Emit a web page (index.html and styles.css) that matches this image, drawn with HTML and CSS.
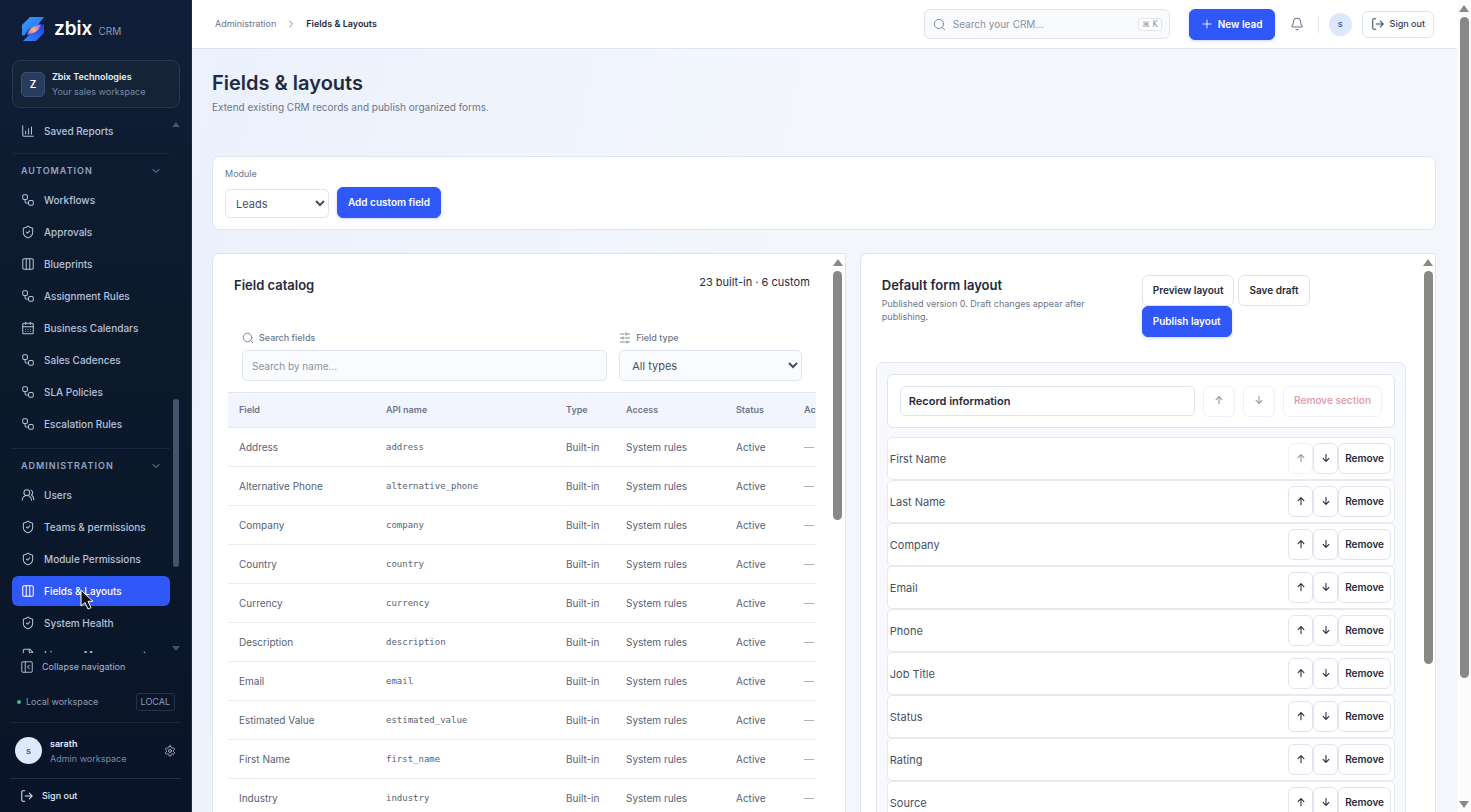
FILE: index.html
```html
<!DOCTYPE html>
<html lang="en">
<head>
<meta charset="utf-8">
<meta name="viewport" content="width=device-width, initial-scale=1">
<title>Fields &amp; Layouts · zbix CRM</title>
<link rel="stylesheet" href="styles.css">
</head>
<body>
<svg class="sprite" aria-hidden="true">
  <symbol id="i-chart" viewBox="0 0 24 24"><path d="M3 3v16a2 2 0 0 0 2 2h16M8 17v-5M13 17V8M18 17V5"/></symbol>
  <symbol id="i-flow" viewBox="0 0 24 24"><rect x="3" y="3" width="8" height="8" rx="2"/><path d="M7 11v4a2 2 0 0 0 2 2h4"/><rect x="13" y="13" width="8" height="8" rx="2"/></symbol>
  <symbol id="i-shield" viewBox="0 0 24 24"><path d="M20 13c0 5-3.500 7.500-7.660 8.950a1 1 0 0 1-.67-.01C7.500 20.500 4 18 4 13V6a1 1 0 0 1 1-1c2 0 4.500-1.200 6.240-2.720a1.170 1.170 0 0 1 1.520 0C14.510 3.810 17 5 19 5a1 1 0 0 1 1 1z"/><path d="m9 12 2 2 4-4"/></symbol>
  <symbol id="i-columns" viewBox="0 0 24 24"><rect x="3" y="3" width="18" height="18" rx="2"/><path d="M9 3v18M15 3v18"/></symbol>
  <symbol id="i-calendar" viewBox="0 0 24 24"><rect x="3" y="4" width="18" height="18" rx="2"/><path d="M8 2v4M16 2v4M3 10h18M8 14h.01M12 14h.01M16 14h.01M8 18h.01M12 18h.01M16 18h.01"/></symbol>
  <symbol id="i-users" viewBox="0 0 24 24"><path d="M18 21a8 8 0 0 0-16 0"/><circle cx="10" cy="8" r="5"/><path d="M22 20c0-3.370-2-6.500-4-8a5 5 0 0 0-.45-8.300"/></symbol>
  <symbol id="i-file" viewBox="0 0 24 24"><path d="M15 2H6a2 2 0 0 0-2 2v16a2 2 0 0 0 2 2h12a2 2 0 0 0 2-2V7z"/><path d="M14 2v4a2 2 0 0 0 2 2h4"/></symbol>
  <symbol id="i-collapse" viewBox="0 0 24 24"><rect x="3" y="3" width="18" height="18" rx="2"/><path d="M9 3v18M16 15l-3-3 3-3"/></symbol>
  <symbol id="i-gear" viewBox="0 0 24 24"><path d="M12.220 2h-.44a2 2 0 0 0-2 2v.18a2 2 0 0 1-1 1.730l-.43.25a2 2 0 0 1-2 0l-.15-.08a2 2 0 0 0-2.730.73l-.22.38a2 2 0 0 0 .73 2.730l.15.1a2 2 0 0 1 1 1.720v.51a2 2 0 0 1-1 1.740l-.15.09a2 2 0 0 0-.73 2.730l.22.38a2 2 0 0 0 2.730.73l.15-.08a2 2 0 0 1 2 0l.43.25a2 2 0 0 1 1 1.730V20a2 2 0 0 0 2 2h.44a2 2 0 0 0 2-2v-.18a2 2 0 0 1 1-1.730l.43-.25a2 2 0 0 1 2 0l.15.08a2 2 0 0 0 2.730-.73l.22-.39a2 2 0 0 0-.73-2.730l-.15-.08a2 2 0 0 1-1-1.740v-.5a2 2 0 0 1 1-1.740l.15-.09a2 2 0 0 0 .73-2.730l-.22-.38a2 2 0 0 0-2.730-.73l-.15.08a2 2 0 0 1-2 0l-.43-.25a2 2 0 0 1-1-1.730V4a2 2 0 0 0-2-2z"/><circle cx="12" cy="12" r="3"/></symbol>
  <symbol id="i-exit" viewBox="0 0 24 24"><path d="M8 3H5a2 2 0 0 0-2 2v14a2 2 0 0 0 2 2h3M9 12h12M16 7l5 5-5 5"/></symbol>
  <symbol id="i-down" viewBox="0 0 24 24"><path d="m6 9 6 6 6-6"/></symbol>
  <symbol id="i-right" viewBox="0 0 24 24"><path d="m9 18 6-6-6-6"/></symbol>
  <symbol id="i-search" viewBox="0 0 24 24"><circle cx="11" cy="11" r="8.500"/><path d="m21.500 21.500-4-4"/></symbol>
  <symbol id="i-plus" viewBox="0 0 24 24"><path d="M4 12h16M12 4v16"/></symbol>
  <symbol id="i-bell" viewBox="0 0 24 24"><path d="M10.270 21a2 2 0 0 0 3.460 0M3.260 15.330A1 1 0 0 0 4 17h16a1 1 0 0 0 .74-1.670C19.410 13.960 18 12.500 18 8A6 6 0 0 0 6 8c0 4.500-1.410 5.960-2.740 7.330"/></symbol>
  <symbol id="i-sliders" viewBox="0 0 24 24"><path d="M21 4h-7M10 4H3M21 12h-9M8 12H3M21 20h-5M12 20H3M14 2v4M8 10v4M16 18v4"/></symbol>
  <symbol id="i-arrow-up" viewBox="0 0 24 24"><path d="M12 21V4M5 11l7-7 7 7"/></symbol>
  <symbol id="i-arrow-down" viewBox="0 0 24 24"><path d="M12 3v17M5 13l7 7 7-7"/></symbol>
</svg>

<div class="app">
  <aside class="sidebar">
    <a class="brand" href="#">
      <svg class="brand-mark" viewBox="0 0 24 26" aria-hidden="true">
        <defs>
          <linearGradient id="g1" x1="0" y1="0" x2="1" y2="1"><stop offset="0" stop-color="#35a0ff"/><stop offset="1" stop-color="#2a62f0"/></linearGradient>
          <linearGradient id="g2" x1="0" y1="1" x2="1" y2="0"><stop offset="0" stop-color="#2f8cff"/><stop offset="1" stop-color="#2a36e8"/></linearGradient>
          <linearGradient id="g3" x1="0" y1="1" x2="1" y2="0"><stop offset="0" stop-color="#6a5cf5"/><stop offset=".45" stop-color="#ffb08a"/><stop offset="1" stop-color="#6a6cff"/></linearGradient>
        </defs>
        <path fill="url(#g1)" d="M9 1h14l-6 8-9 4-5 7-2-1V9z"/>
        <path fill="url(#g2)" d="M23 8v9l-8 8H2l6-6 8-4 4-6z"/>
        <path fill="url(#g3)" d="M6 19c1-6 6-9 14-11-2 7-6 9-14 11z"/>
      </svg>
      <span class="brand-name">zbix</span><span class="brand-tag">CRM</span>
    </a>
    <div class="workspace">
      <span class="workspace-badge">Z</span>
      <span class="stack"><strong>Zbix Technologies</strong><small>Your sales workspace</small></span>
    </div>
    <div class="nav-wrap">
      <nav class="nav" aria-label="Main">
        <ul class="nav-list">
          <li><a href="#"><svg class="icon"><use href="#i-chart"/></svg>Saved Reports</a></li>
        </ul>
        <section class="nav-group">
          <button class="nav-heading" type="button">AUTOMATION<svg class="icon small"><use href="#i-down"/></svg></button>
          <ul class="nav-list">
            <li><a href="#"><svg class="icon"><use href="#i-flow"/></svg>Workflows</a></li>
            <li><a href="#"><svg class="icon"><use href="#i-shield"/></svg>Approvals</a></li>
            <li><a href="#"><svg class="icon"><use href="#i-columns"/></svg>Blueprints</a></li>
            <li><a href="#"><svg class="icon"><use href="#i-flow"/></svg>Assignment Rules</a></li>
            <li><a href="#"><svg class="icon"><use href="#i-calendar"/></svg>Business Calendars</a></li>
            <li><a href="#"><svg class="icon"><use href="#i-flow"/></svg>Sales Cadences</a></li>
            <li><a href="#"><svg class="icon"><use href="#i-flow"/></svg>SLA Policies</a></li>
            <li><a href="#"><svg class="icon"><use href="#i-flow"/></svg>Escalation Rules</a></li>
          </ul>
        </section>
        <section class="nav-group">
          <button class="nav-heading" type="button">ADMINISTRATION<svg class="icon small"><use href="#i-down"/></svg></button>
          <ul class="nav-list">
            <li><a href="#"><svg class="icon"><use href="#i-users"/></svg>Users</a></li>
            <li><a href="#"><svg class="icon"><use href="#i-shield"/></svg>Teams &amp; permissions</a></li>
            <li><a href="#"><svg class="icon"><use href="#i-shield"/></svg>Module Permissions</a></li>
            <li class="current"><a href="#" aria-current="page"><svg class="icon"><use href="#i-columns"/></svg>Fields &amp; Layouts</a>
              <svg class="pointer" viewBox="0 0 14 22" aria-hidden="true"><path d="M1 1v16l4-3.500 3 6.500 3-1.400-3-6.300h5z"/></svg></li>
            <li><a href="#"><svg class="icon"><use href="#i-shield"/></svg>System Health</a></li>
            <li><a href="#"><svg class="icon"><use href="#i-file"/></svg>License Management</a></li>
          </ul>
        </section>
      </nav>
      <div class="nav-scroll" aria-hidden="true"><i class="tri up"></i><i class="track"><i class="thumb"></i></i><i class="tri down"></i></div>
    </div>
    <button class="collapse" type="button"><svg class="icon"><use href="#i-collapse"/></svg>Collapse navigation</button>
    <div class="env"><span class="dot"></span>Local workspace<span class="env-tag">LOCAL</span></div>
    <div class="account">
      <span class="avatar">s</span>
      <span class="stack"><strong>sarath</strong><small>Admin workspace</small></span>
      <button class="plain" type="button" aria-label="Settings"><svg class="icon small"><use href="#i-gear"/></svg></button>
    </div>
    <button class="signout" type="button"><svg class="icon"><use href="#i-exit"/></svg>Sign out</button>
  </aside>

  <div class="page">
    <header class="topbar">
      <nav class="crumbs" aria-label="Breadcrumb"><a href="#">Administration</a><svg class="icon small"><use href="#i-right"/></svg><strong>Fields &amp; Layouts</strong></nav>
      <label class="search"><svg class="icon"><use href="#i-search"/></svg><input type="search" placeholder="Search your CRM…" aria-label="Search your CRM"><kbd>⌘ K</kbd></label>
      <button class="btn primary new-lead" type="button"><svg class="icon small"><use href="#i-plus"/></svg>New lead</button>
      <button class="plain bell" type="button" aria-label="Notifications"><svg class="icon"><use href="#i-bell"/></svg></button>
      <span class="divider"></span>
      <span class="avatar mini">s</span>
      <button class="btn top-signout" type="button"><svg class="icon"><use href="#i-exit"/></svg>Sign out</button>
    </header>

    <main class="content">
      <div class="page-head">
        <h1>Fields &amp; layouts</h1>
        <p>Extend existing CRM records and publish organized forms.</p>
      </div>

      <section class="card module">
        <label for="module">Module</label>
        <div class="module-row">
          <select id="module"><option>Leads</option></select>
          <button class="btn primary" type="button">Add custom field</button>
        </div>
      </section>

      <div class="panels">
        <section class="card panel">
          <div class="panel-body">
            <div class="panel-head catalog-head"><h2>Field catalog</h2><span>23 built-in · 6 custom</span></div>
            <div class="filters">
              <div class="filter"><label for="q"><svg class="icon small"><use href="#i-search"/></svg>Search fields</label><input id="q" type="text" placeholder="Search by name…"></div>
              <div class="filter"><label for="type"><svg class="icon small"><use href="#i-sliders"/></svg>Field type</label><select id="type"><option>All types</option></select></div>
            </div>
            <div class="table-wrap">
              <table>
                <colgroup><col class="c-field"><col class="c-api"><col class="c-type"><col class="c-access"><col class="c-status"><col class="c-actions"></colgroup>
                <thead><tr><th>Field</th><th>API name</th><th>Type</th><th>Access</th><th>Status</th><th>Actions</th></tr></thead>
                <tbody>
                  <tr><td>Address</td><td><code>address</code></td><td>Built-in</td><td>System rules</td><td>Active</td><td>—</td></tr>
                  <tr><td>Alternative Phone</td><td><code>alternative_phone</code></td><td>Built-in</td><td>System rules</td><td>Active</td><td>—</td></tr>
                  <tr><td>Company</td><td><code>company</code></td><td>Built-in</td><td>System rules</td><td>Active</td><td>—</td></tr>
                  <tr><td>Country</td><td><code>country</code></td><td>Built-in</td><td>System rules</td><td>Active</td><td>—</td></tr>
                  <tr><td>Currency</td><td><code>currency</code></td><td>Built-in</td><td>System rules</td><td>Active</td><td>—</td></tr>
                  <tr><td>Description</td><td><code>description</code></td><td>Built-in</td><td>System rules</td><td>Active</td><td>—</td></tr>
                  <tr><td>Email</td><td><code>email</code></td><td>Built-in</td><td>System rules</td><td>Active</td><td>—</td></tr>
                  <tr><td>Estimated Value</td><td><code>estimated_value</code></td><td>Built-in</td><td>System rules</td><td>Active</td><td>—</td></tr>
                  <tr><td>First Name</td><td><code>first_name</code></td><td>Built-in</td><td>System rules</td><td>Active</td><td>—</td></tr>
                  <tr><td>Industry</td><td><code>industry</code></td><td>Built-in</td><td>System rules</td><td>Active</td><td>—</td></tr>
                </tbody>
              </table>
            </div>
          </div>
          <div class="scrollbar" aria-hidden="true"><i class="tri up"></i><i class="track"><i class="thumb t-catalog"></i></i></div>
        </section>

        <section class="card panel">
          <div class="panel-body">
            <div class="panel-head layout-head">
              <div><h2>Default form layout</h2><p>Published version 0. Draft changes appear after publishing.</p></div>
              <div class="actions"><button class="btn" type="button">Preview layout</button><button class="btn" type="button">Save draft</button><button class="btn primary" type="button">Publish layout</button></div>
            </div>
            <div class="section-box">
              <div class="section-head">
                <input type="text" value="Record information" aria-label="Section name">
                <button class="btn arrow" type="button" disabled aria-label="Move section up"><svg class="icon tiny"><use href="#i-arrow-up"/></svg></button>
                <button class="btn arrow" type="button" disabled aria-label="Move section down"><svg class="icon tiny"><use href="#i-arrow-down"/></svg></button>
                <button class="btn danger" type="button" disabled>Remove section</button>
              </div>
              <ul class="rows">
                <li><span>First Name</span><button class="btn" type="button" disabled aria-label="Up"><svg class="icon tiny"><use href="#i-arrow-up"/></svg></button><button class="btn" type="button" aria-label="Down"><svg class="icon tiny"><use href="#i-arrow-down"/></svg></button><button class="btn" type="button">Remove</button></li>
                <li><span>Last Name</span><button class="btn" type="button" aria-label="Up"><svg class="icon tiny"><use href="#i-arrow-up"/></svg></button><button class="btn" type="button" aria-label="Down"><svg class="icon tiny"><use href="#i-arrow-down"/></svg></button><button class="btn" type="button">Remove</button></li>
                <li><span>Company</span><button class="btn" type="button" aria-label="Up"><svg class="icon tiny"><use href="#i-arrow-up"/></svg></button><button class="btn" type="button" aria-label="Down"><svg class="icon tiny"><use href="#i-arrow-down"/></svg></button><button class="btn" type="button">Remove</button></li>
                <li><span>Email</span><button class="btn" type="button" aria-label="Up"><svg class="icon tiny"><use href="#i-arrow-up"/></svg></button><button class="btn" type="button" aria-label="Down"><svg class="icon tiny"><use href="#i-arrow-down"/></svg></button><button class="btn" type="button">Remove</button></li>
                <li><span>Phone</span><button class="btn" type="button" aria-label="Up"><svg class="icon tiny"><use href="#i-arrow-up"/></svg></button><button class="btn" type="button" aria-label="Down"><svg class="icon tiny"><use href="#i-arrow-down"/></svg></button><button class="btn" type="button">Remove</button></li>
                <li><span>Job Title</span><button class="btn" type="button" aria-label="Up"><svg class="icon tiny"><use href="#i-arrow-up"/></svg></button><button class="btn" type="button" aria-label="Down"><svg class="icon tiny"><use href="#i-arrow-down"/></svg></button><button class="btn" type="button">Remove</button></li>
                <li><span>Status</span><button class="btn" type="button" aria-label="Up"><svg class="icon tiny"><use href="#i-arrow-up"/></svg></button><button class="btn" type="button" aria-label="Down"><svg class="icon tiny"><use href="#i-arrow-down"/></svg></button><button class="btn" type="button">Remove</button></li>
                <li><span>Rating</span><button class="btn" type="button" aria-label="Up"><svg class="icon tiny"><use href="#i-arrow-up"/></svg></button><button class="btn" type="button" aria-label="Down"><svg class="icon tiny"><use href="#i-arrow-down"/></svg></button><button class="btn" type="button">Remove</button></li>
                <li><span>Source</span><button class="btn" type="button" aria-label="Up"><svg class="icon tiny"><use href="#i-arrow-up"/></svg></button><button class="btn" type="button" aria-label="Down"><svg class="icon tiny"><use href="#i-arrow-down"/></svg></button><button class="btn" type="button">Remove</button></li>
              </ul>
            </div>
          </div>
          <div class="scrollbar" aria-hidden="true"><i class="tri up"></i><i class="track"><i class="thumb t-layout"></i></i></div>
        </section>
      </div>
    </main>
  </div>
  <div class="scrollbar page-scroll" aria-hidden="true"><i class="tri up"></i><i class="track"><i class="thumb t-page"></i></i><i class="tri down"></i></div>
</div>
</body>
</html>
```
FILE: styles.css
```css
:root {
  --font: "Inter", "Open Sans", sans-serif;
  --blue: #3058f8;
  --ink: #1f2a3d;
  --text: #465064;
  --muted: #6c768a;
  --line: #dfe4ee;
}
* { box-sizing: border-box; }
body { margin: 0; background: #fff; color: var(--text); font: 400 11px/16px var(--font); }
button, input, select { font: inherit; color: inherit; margin: 0; }
button { cursor: pointer; }
ul { list-style: none; margin: 0; padding: 0; }
h1, h2, p { margin: 0; }
a { color: inherit; text-decoration: none; }
.sprite { display: none; }
.icon { width: 14px; height: 14px; flex: none; fill: none; stroke: currentColor; stroke-width: 1.75; stroke-linecap: round; stroke-linejoin: round; }
.icon.small { width: 12px; height: 12px; }
.icon.tiny { width: 10px; height: 10px; stroke-width: 2.5; }

.app { display: flex; height: 100vh; overflow: hidden; }

/* Sidebar */
.sidebar { width: 192px; flex: none; display: flex; flex-direction: column; background: linear-gradient(#101e38, #0c1a2c 40%, #0a1428); color: #b4c3dc; border-right: 1px solid #1d2b40; }
.brand { display: flex; align-items: center; height: 60px; padding: 0 20px 2px; }
.brand-mark { width: 26px; height: 26px; }
.brand-name { margin-left: 8px; color: #fff; font-size: 19px; font-weight: 600; line-height: 24px; }
.brand-tag { margin: 4px 0 0 6px; font-size: 10px; color: #8d9bb5; }
.workspace { display: flex; align-items: center; gap: 7px; margin: 0 11px 0 12px; padding: 0 8px; height: 48px; border: 1px solid #2a384e; border-radius: 8px; background: #152337; }
.workspace-badge { display: grid; place-items: center; width: 24px; height: 25px; border: 1px solid #3a5076; border-radius: 5px; background: #293c5d; color: #fff; font-weight: 600; font-size: 10px; }
.stack { display: flex; flex-direction: column; line-height: 15px; white-space: nowrap; }
.stack strong { color: #e8eefa; font-size: 9px; font-weight: 600; }
.stack small { color: #7888a3; font-size: 9px; }
.nav-wrap { flex: 1; min-height: 0; display: flex; margin: 8px 11px 0 12px; }
.nav { flex: 1; overflow: hidden; }
.nav-list { display: flex; flex-direction: column; gap: 2px; }
.nav-list li { position: relative; }
.nav-list a { display: flex; align-items: center; gap: 9px; height: 30px; padding: 0 9px; border-radius: 6px; font-size: 10px; font-weight: 500; white-space: nowrap; }
.nav-list .current a { background: var(--blue); color: #fff; }
.pointer { position: absolute; left: 68px; top: 13px; width: 14px; height: 22px; fill: #111; stroke: #fff; stroke-width: 1; }
.nav-group { margin-top: 7px; padding: 4px 0 2px; border-top: 1px solid #1b2940; }
.nav-heading { display: flex; align-items: center; justify-content: space-between; width: 100%; height: 27px; padding: 0 8px 2px 9px; border: 0; background: none; font-size: 9px; font-weight: 600; letter-spacing: 1px; color: #93a5c4; }
.nav-scroll { width: 10px; display: flex; flex-direction: column; align-items: flex-end; padding: 6px 0 2px; }
.nav-scroll .track { width: 7px; }
.nav-scroll .thumb { margin: 272px 0 0; width: 6px; height: 168px; background: #44546d; }
.nav-scroll .tri { border-width: 4px; }
.nav-scroll .tri.up { border-top-width: 0; border-bottom: 5px solid #45536b; }
.nav-scroll .tri.down { border-bottom-width: 0; border-top: 5px solid #45536b; }
.collapse, .signout { display: flex; align-items: center; gap: 8px; border: 0; background: none; text-align: left; font-size: 9px; }
.collapse { height: 28px; padding: 0 20px; color: #a8b7d0; }
.env { display: flex; align-items: center; gap: 5px; height: 41px; padding: 0 16px 0 17px; color: #8e9db7; font-size: 9px; }
.dot { width: 4px; height: 4px; border-radius: 50%; background: #3fb795; }
.env-tag { margin-left: auto; padding: 0 4px; border: 1px solid #26344a; border-radius: 3px; }
.account { display: flex; align-items: center; gap: 8px; height: 57px; margin: 0 10px; padding: 0 5px; border-top: 1px solid #1a273a; border-bottom: 1px solid #223046; }
.avatar { display: grid; place-items: center; width: 27px; height: 27px; border-radius: 50%; background: #dfe8fc; color: #44597e; font-size: 9px; font-weight: 600; }
.plain { display: grid; place-items: center; padding: 0; border: 0; background: none; }
.account .plain { margin-left: auto; }
.signout { height: 33px; padding: 0 20px; color: #e2e9f5; font-weight: 500; }

/* Page */
.page { flex: 1; min-width: 0; display: flex; flex-direction: column; background: linear-gradient(100deg, #ebf1fd, #f3f6fc 45%, #f3f6fb); }
.topbar { display: flex; align-items: center; height: 49px; flex: none; padding: 0 23px; background: #fff; border-bottom: 1px solid #dbe4f0; }
.crumbs { display: flex; align-items: center; gap: 9px; margin-right: auto; font-size: 9px; color: var(--muted); }
.crumbs strong { color: var(--ink); font-weight: 600; }
.search { display: flex; align-items: center; gap: 7px; width: 246px; height: 30px; padding: 0 7px 0 8px; border: 1px solid var(--line); border-radius: 6px; background: #f8fafd; color: #7b8598; font-size: 10px; }
.search input { flex: 1; min-width: 0; padding: 0; border: 0; outline: 0; background: none; }
.search .icon { width: 13px; height: 13px; }
::placeholder { color: #8a92a2; opacity: 1; }
kbd { padding: 0 3px; border: 1px solid var(--line); border-radius: 3px; background: #fff; color: #8a92a2; font: 8px/11px "DejaVu Sans", sans-serif; }
.btn { display: inline-flex; align-items: center; justify-content: center; height: 31px; padding: 0 10px 2px; border: 1px solid var(--line); border-radius: 6px; background: #fff; color: var(--ink); font-size: 10px; font-weight: 600; white-space: nowrap; }
.btn.primary { background: var(--blue); border-color: var(--blue); color: #fff; box-shadow: 0 1px 3px #3058f840; }
.btn:disabled { opacity: .5; }
.btn.danger { color: #c8405c; }
.new-lead { margin-left: 19px; padding: 0 11px; gap: 5px; }
.bell { margin-left: 15px; color: #6b7485; }
.divider { width: 1px; height: 17px; margin: 0 10px 0 14px; background: var(--line); }
.avatar.mini { width: 23px; height: 23px; background: #dce8fc; color: #3a5fa8; }
.top-signout { margin-left: 10px; height: 27px; padding: 0 8px; gap: 5px; font-size: 9px; font-weight: 500; color: #354054; }
.content { flex: 1; min-height: 0; display: flex; flex-direction: column; padding: 20px 21px 0 20px; }
.page-head { height: 87px; flex: none; }
h1 { color: var(--ink); font-size: 20px; line-height: 28px; font-weight: 600; }
.page-head p { margin-top: 2px; color: var(--muted); font-size: 10px; }
.card { border: 1px solid var(--line); border-radius: 7px; background: #fff; }
.module { flex: none; padding: 9px 12px 11px; }
.module label { display: block; color: var(--muted); font-size: 9px; }
.module-row { display: flex; align-items: flex-end; gap: 8px; margin-top: 5px; }
select, input[type="text"] { border: 1px solid var(--line); border-radius: 5px; background: #fff; }
.module select { width: 104px; height: 29px; padding: 0 6px; }
.panels { flex: 1; min-height: 0; display: grid; grid-template-columns: 11fr 10fr; grid-template-rows: minmax(0, 1fr); gap: 14px; margin-top: 23px; }
.panel { display: flex; min-width: 0; overflow: hidden; border-bottom: 0; border-radius: 7px 0 0; }
.panel-body { flex: 1; min-width: 0; padding: 15px 15px 0; overflow: hidden; }
.panel-head { display: flex; justify-content: space-between; padding: 6px 6px 0; }
h2 { color: var(--ink); font-size: 13px; line-height: 20px; font-weight: 600; }
.catalog-head { height: 60px; color: var(--ink); }
.catalog-head span { line-height: 15px; }
.filters { display: grid; grid-template-columns: 2fr 1fr; gap: 12px; padding: 0 14px 11px; }
.filter label { display: flex; align-items: center; gap: 5px; height: 18px; margin-bottom: 3px; color: var(--muted); font-size: 9px; font-weight: 500; }
.filter input, .filter select { display: block; width: 100%; height: 31px; background: #fafbfe; }
.filter input { padding: 0 9px; font-size: 10px; }
.filter select { padding: 0 8px; }
.table-wrap { overflow: hidden; }
table { width: 100%; min-width: 666px; table-layout: fixed; border-collapse: collapse; }
.c-field { width: 147px; } .c-api { width: 180px; } .c-type { width: 60px; } .c-access { width: 110px; } .c-status { width: 68px; }
th, td { height: 39px; padding: 0 11px 1px; text-align: left; white-space: nowrap; font-size: 10px; border-bottom: 1px solid #e8ebf1; }
th { height: 35px; background: #f2f5fd; border-top: 1px solid var(--line); color: var(--muted); font-size: 9px; font-weight: 600; }
td { color: #586275; }
td:last-child { color: #9aa1ae; }
code { font: 9px/16px "DejaVu Sans Mono", monospace; }
.layout-head { display: grid; grid-template-columns: 17fr 18fr; height: 93px; gap: 16px; }
.layout-head p { margin-top: 2px; font-size: 9px; line-height: 13px; color: var(--muted); }
.actions { display: flex; flex-wrap: wrap; align-content: flex-start; column-gap: 4px; }
.section-box { padding: 11px 10px; border: 1px solid #e3e7f1; border-radius: 7px; background: #f7f9fe; }
.section-head { display: flex; align-items: center; gap: 8px; height: 54px; padding: 0 12px; border: 1px solid var(--line); border-radius: 6px; background: #fff; }
.section-head input { flex: 1; min-width: 0; height: 30px; padding: 0 8px; color: var(--ink); font-weight: 600; }
.section-head .arrow { width: 32px; padding: 0 0 2px; }
.rows { margin-top: 9px; }
.rows li { display: flex; align-items: center; height: 43px; padding: 0 3px 0 2px; border: 1px solid #e6e9f0; border-radius: 5px; background: #fff; }
.rows span { flex: 1; }
.rows .btn { padding: 0 6px 2px; }
.rows .btn:has(svg) { width: 25px; padding: 0 0 2px; }

/* Scrollbars */
.scrollbar { width: 14px; flex: none; display: flex; flex-direction: column; align-items: center; padding: 5px 0; }
.tri { border: 5px solid transparent; }
.tri.up { border-top-width: 0; border-bottom: 7px solid #888; }
.tri.down { border-bottom-width: 0; border-top: 7px solid #888; }
.track { flex: 1; width: 9px; }
.thumb { display: block; width: 100%; margin-top: 5px; border-radius: 5px; background: #888; }
.t-catalog { height: 249px; }
.t-layout { height: 393px; }
.t-page { height: 661px; }
.page-scroll { background: #fcfcfc; padding: 5px 0 4px; }
```
